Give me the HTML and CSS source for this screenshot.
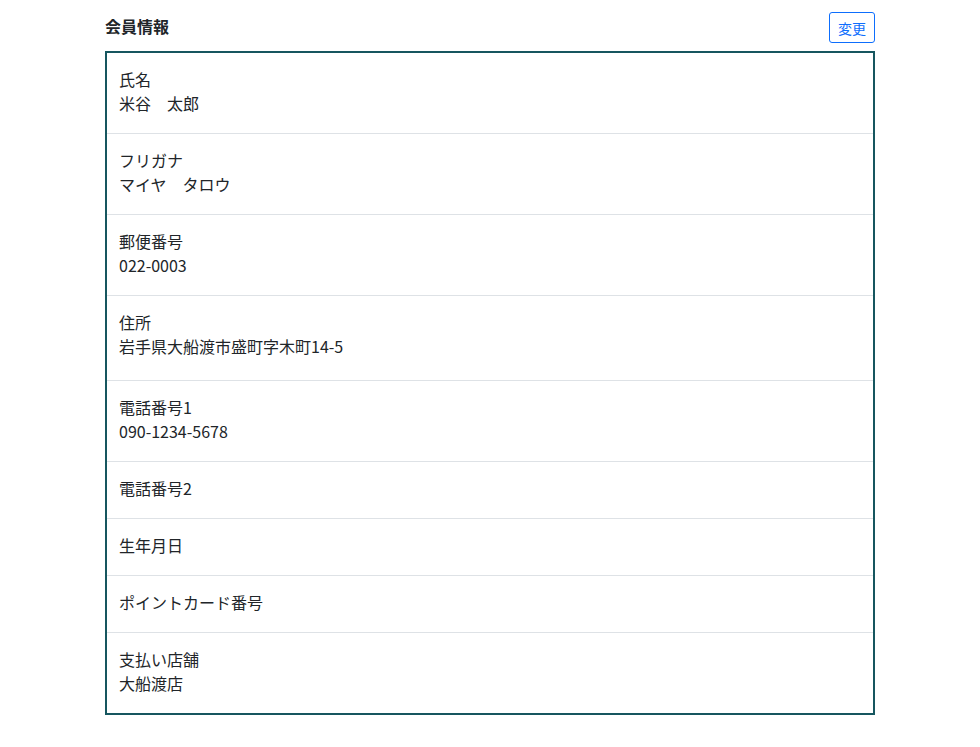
FILE: index.html
```html
<!DOCTYPE html>
<html lang="ja">
<head>
    <meta charset="UTF-8">
    <meta name="viewport" content="width=device-width, initial-scale=1.0">
    <title>会員情報</title>
    <link rel="stylesheet" href="styles.css">
</head>
<body>
    <div class="conteiner">
        <div class="cabecalho">
            <h1>会員情報</h1>
            <button type="button">変更</button>
        </div>
        <dl class="lista">
            <div class="item">
                <dt>氏名</dt>
                <dd>米谷　太郎</dd>
            </div>
            <div class="item">
                <dt>フリガナ</dt>
                <dd>マイヤ　タロウ</dd>
            </div>
            <div class="item">
                <dt>郵便番号</dt>
                <dd>022-0003</dd>
            </div>
            <div class="item item-alto">
                <dt>住所</dt>
                <dd>岩手県大船渡市盛町字木町14-5</dd>
            </div>
            <div class="item">
                <dt>電話番号1</dt>
                <dd>090-1234-5678</dd>
            </div>
            <div class="item">
                <dt>電話番号2</dt>
            </div>
            <div class="item">
                <dt>生年月日</dt>
            </div>
            <div class="item">
                <dt>ポイントカード番号</dt>
            </div>
            <div class="item">
                <dt>支払い店舗</dt>
                <dd>大船渡店</dd>
            </div>
        </dl>
    </div>
</body>
</html>
```
FILE: styles.css
```css
*{
    margin: 0px;
    padding: 0px;
    box-sizing: border-box;
}
body{
    font-family: "Noto Sans CJK JP", "Noto Sans", sans-serif;
    color: #212529;
    background-color: #fff;
}
.conteiner{
    width: 770px;
    margin: 12px auto 0;
}
.cabecalho{
    display: flex;
    justify-content: space-between;
    align-items: center;
    height: 31px;
    margin-bottom: 8px;
}
h1{
    font-size: 16px;
    font-weight: 700;
    line-height: 1;
    padding-bottom: 4px;
}
button{
    width: 46px;
    height: 31px;
    font-family: inherit;
    font-size: 14px;
    color: #0d6efd;
    background-color: #fff;
    border: 1px solid #0d6efd;
    border-radius: 3px;
    cursor: pointer;
}
.lista{
    border: 2px solid #16565f;
}
.item{
    padding: 14px 12px 18px;
    border-top: 1px solid #dee2e6;
    font-size: 16px;
    line-height: 24px;
}
.item:first-child{
    border-top: none;
}
.item-alto{
    padding-bottom: 22px;
}
dd{
    margin: 0;
}
```
